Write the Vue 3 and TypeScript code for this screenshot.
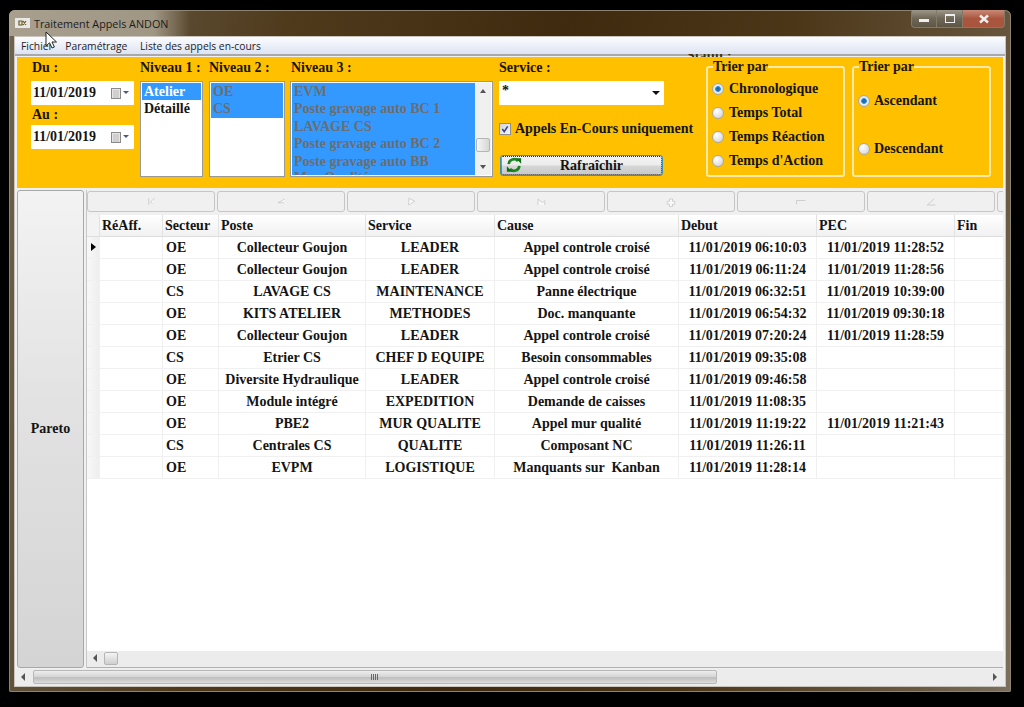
<script setup lang="ts">
const niveau1 = [
  { t: 'Atelier', on: true },
  { t: 'Détaillé', on: false },
]
const niveau3 = ['EVM', 'Poste gravage auto BC 1', 'LAVAGE CS', 'Poste gravage auto BC 2', 'Poste gravage auto BB', 'Mur Qualité']
const sortA = [
  { t: 'Chronologique', on: true },
  { t: 'Temps Total', on: false },
  { t: 'Temps Réaction', on: false },
  { t: "Temps d'Action", on: false },
]
const sortB = [
  { t: 'Ascendant', on: true },
  { t: 'Descendant', on: false },
]
const navIcons = [
  'M5 3v9M13 3 7 8l3 2',
  'M13 4 4 9h8',
  'M5 3v9l8-5z',
  'M4 12V4l6 5 3-3v6',
  'M6 4h4v3h3v4h-3v3H6v-3H3V7h3z',
  'M2 6h12M2 6v5',
  'M3 12 12 4M3 12h11',
  'M4 4h8',
]
const headers = ['', 'RéAff.', 'Secteur', 'Poste', 'Service', 'Cause', 'Debut', 'PEC', 'Fin']
const rows = [
  ['OE', 'Collecteur Goujon', 'LEADER', 'Appel controle croisé', '11/01/2019 06:10:03', '11/01/2019 11:28:52'],
  ['OE', 'Collecteur Goujon', 'LEADER', 'Appel controle croisé', '11/01/2019 06:11:24', '11/01/2019 11:28:56'],
  ['CS', 'LAVAGE CS', 'MAINTENANCE', 'Panne électrique', '11/01/2019 06:32:51', '11/01/2019 10:39:00'],
  ['OE', 'KITS ATELIER', 'METHODES', 'Doc. manquante', '11/01/2019 06:54:32', '11/01/2019 09:30:18'],
  ['OE', 'Collecteur Goujon', 'LEADER', 'Appel controle croisé', '11/01/2019 07:20:24', '11/01/2019 11:28:59'],
  ['CS', 'Etrier CS', 'CHEF D EQUIPE', 'Besoin consommables', '11/01/2019 09:35:08', ''],
  ['OE', 'Diversite Hydraulique', 'LEADER', 'Appel controle croisé', '11/01/2019 09:46:58', ''],
  ['OE', 'Module intégré', 'EXPEDITION', 'Demande de caisses', '11/01/2019 11:08:35', ''],
  ['OE', 'PBE2', 'MUR QUALITE', 'Appel mur qualité', '11/01/2019 11:19:22', '11/01/2019 11:21:43'],
  ['CS', 'Centrales CS', 'QUALITE', 'Composant NC', '11/01/2019 11:26:11', ''],
  ['OE', 'EVPM', 'LOGISTIQUE', 'Manquants sur  Kanban', '11/01/2019 11:28:14', ''],
]
</script>

<template>
  <div class="window">
    <header class="titlebar">
      <div class="app-title">
        <svg class="app-icon" width="15" height="10" viewBox="0 0 15 10">
          <rect width="15" height="10" fill="#e8e8e8" />
          <path d="M4 3h3v4H4zM8 3l3 4M11 3 8 7" fill="none" stroke="#6b5a1c" stroke-width="1.2" />
        </svg>
        <span class="title-text">Traitement Appels ANDON</span>
      </div>
      <div class="controls">
        <button class="ctl"><span class="min-mark"></span></button>
        <button class="ctl"><span class="max-mark"></span></button>
        <button class="ctl close">
          <svg width="12" height="10" viewBox="0 0 12 10"><path d="M2 1.5 10 8.5M10 1.5 2 8.5" stroke="#eeeeee" stroke-width="2.4" /></svg>
        </button>
      </div>
    </header>

    <div class="client">
      <nav class="menu">
        <span>Fichier</span>
        <span>Paramétrage</span>
        <span>Liste des appels en-cours</span>
      </nav>
      <span class="hidden-label">Statut :</span>

      <section class="panel">
        <div class="dates">
          <label class="lbl">Du :</label>
          <div class="date">
            <span>11/01/2019</span>
            <svg width="20" height="13" viewBox="0 0 20 13">
              <rect x="1.5" y="1.5" width="9" height="10" fill="#e6e6e6" stroke="#8a8a8a" />
              <path d="M3 4h6M3 6h6M3 8h6M3 10h6" stroke="#b9b9b9" />
              <path d="M13 4h6l-3 3z" fill="#4e5a7a" />
            </svg>
          </div>
          <label class="lbl au">Au :</label>
          <div class="date">
            <span>11/01/2019</span>
            <svg width="20" height="13" viewBox="0 0 20 13">
              <rect x="1.5" y="1.5" width="9" height="10" fill="#e6e6e6" stroke="#8a8a8a" />
              <path d="M3 4h6M3 6h6M3 8h6M3 10h6" stroke="#b9b9b9" />
              <path d="M13 4h6l-3 3z" fill="#4e5a7a" />
            </svg>
          </div>
        </div>

        <div class="col n1">
          <label class="lbl">Niveau 1 :</label>
          <ul class="list">
            <li v-for="i in niveau1" :key="i.t" :class="{ active: i.on }">{{ i.t }}</li>
          </ul>
        </div>

        <div class="col n2">
          <label class="lbl">Niveau 2 :</label>
          <ul class="list">
            <li class="sel">OE</li>
            <li class="sel">CS</li>
          </ul>
        </div>

        <div class="col n3">
          <label class="lbl">Niveau 3 :</label>
          <div class="list list3">
            <ul>
              <li v-for="i in niveau3" :key="i" class="sel">{{ i }}</li>
            </ul>
            <div class="vscroll">
              <span class="tri up"></span>
              <span class="vthumb"></span>
              <span class="tri down"></span>
            </div>
          </div>
        </div>

        <div class="col service">
          <label class="lbl">Service :</label>
          <div class="combo"><span class="star">*</span><i class="tri down dark"></i></div>
          <div class="check">
            <span class="box">
              <svg width="10" height="10" viewBox="0 0 13 13"><path d="M3 6.5 5.5 10 10 3" fill="none" stroke="#34418c" stroke-width="2" /></svg>
            </span>
            <span>Appels En-Cours uniquement</span>
          </div>
          <button class="refresh">
            <svg width="16" height="16" viewBox="0 0 18 17">
              <path d="M3 7.5A6 6 0 0 1 13.5 4" fill="none" stroke="#16861f" stroke-width="3" />
              <path d="M11 1h6v6z" fill="#0f6d18" />
              <path d="M15 9.5A6 6 0 0 1 4.5 13" fill="none" stroke="#16861f" stroke-width="3" />
              <path d="M7 16H1v-6z" fill="#0f6d18" />
            </svg>
            <span>Rafraîchir</span>
          </button>
        </div>

        <fieldset class="group g1">
          <legend>Trier par</legend>
          <div v-for="o in sortA" :key="o.t" class="radio">
            <span class="dot" :class="{ on: o.on }"></span>{{ o.t }}
          </div>
        </fieldset>
        <fieldset class="group g2">
          <legend>Trier par</legend>
          <div v-for="o in sortB" :key="o.t" class="radio">
            <span class="dot" :class="{ on: o.on }"></span>{{ o.t }}
          </div>
        </fieldset>
      </section>

      <div class="work">
        <button class="pareto">Pareto</button>
        <div class="main">
          <div class="navbar">
            <button v-for="(d, n) in navIcons" :key="n" class="nav">
              <svg width="12" height="12" viewBox="0 0 16 16"><path :d="d" fill="#f9f9f9" stroke="#c4c4c4" /></svg>
            </button>
          </div>
          <div class="grid">
            <div class="row head">
              <div v-for="(h, n) in headers" :key="n" class="cell">{{ h }}</div>
            </div>
            <div v-for="(r, n) in rows" :key="n" class="row">
              <div class="cell rh"><span v-if="n === 0" class="pointer"></span></div>
              <div class="cell"></div>
              <div class="cell left">{{ r[0] }}</div>
              <div class="cell">{{ r[1] }}</div>
              <div class="cell">{{ r[2] }}</div>
              <div class="cell">{{ r[3] }}</div>
              <div class="cell">{{ r[4] }}</div>
              <div class="cell">{{ r[5] }}</div>
              <div class="cell"></div>
            </div>
            <div class="grid-fill"></div>
            <div class="hscroll inner">
              <span class="tri lefty"></span>
              <span class="small-thumb"></span>
            </div>
          </div>
        </div>
      </div>

      <div class="hscroll outer">
        <span class="tri lefty"></span>
        <span class="big-thumb"><i></i></span>
        <span class="tri righty"></span>
      </div>
    </div>

    <svg class="cursor" width="12" height="19" viewBox="0 0 12 19">
      <path d="M1 1v14l3.5-3.2L7 17l2.4-1-2.4-5h4.5z" fill="#fff" stroke="#222" stroke-width="1" />
    </svg>
  </div>
</template>

<style scoped>
.window {
  position: relative;
  box-sizing: border-box;
  width: 1002px;
  height: 682px;
  margin: 10px 0 0 9px;
  padding: 0 6px 6px;
  display: flex;
  flex-direction: column;
  border-radius: 6px 6px 2px 2px;
  background: linear-gradient(100deg, #6e6350 0, #4f3a1c 25%, #3f2a0f 50%, #4c3618 70%, #6a5a42 92%, #7b705e 100%);
  box-shadow: inset 0 0 0 1px #8d8371;
  font-family: "Liberation Serif", serif;
  font-weight: 700;
  font-size: 14px;
  color: #141414;
}
.titlebar {
  height: 27px;
  flex: none;
  display: flex;
  justify-content: space-between;
  align-items: flex-start;
}
.app-title {
  display: flex;
  align-items: center;
  gap: 4px;
  height: 26px;
  margin-left: -6px;
  padding: 0 22px 0 6px;
  border-top-left-radius: 6px;
  background: linear-gradient(90deg, #a89f8e 0, #a09684 80%, rgba(120, 106, 84, 0) 100%);
}
.app-icon { flex: none; margin-top: -1px; }
.title-text {
  font: 400 10.8px "Open Sans", "Noto Sans", sans-serif;
  color: #1c1c1c;
}
.controls { display: flex; height: 18px; margin-right: 0; }
.ctl {
  width: 26px;
  height: 18px;
  padding: 0;
  border: 1px solid #847a6a;
  border-top: none;
  border-left-width: 0;
  background: linear-gradient(#9e9688, #6e6656 50%, #5e5645);
  display: flex;
  align-items: center;
  justify-content: center;
}
.ctl:first-child { border-left-width: 1px; border-radius: 0 0 0 4px; }
.close {
  width: 42px;
  border-radius: 0 0 4px 0;
  background: linear-gradient(#c98a76, #a9563f 50%, #a9553d);
}
.min-mark { display: block; width: 10px; height: 3px; background: #eee; margin-top: 4px; }
.max-mark { display: block; width: 8px; height: 6px; border: 1.5px solid #eee; border-top-width: 2.5px; }

.client {
  position: relative;
  flex: 1;
  min-height: 0;
  display: flex;
  flex-direction: column;
  background: #f0f0f0;
  box-shadow: 0 0 0 1px #c8c4bb;
  overflow: hidden;
}
.menu {
  height: 17px;
  flex: none;
  display: flex;
  align-items: center;
  gap: 12.5px;
  padding-left: 6px;
  background: linear-gradient(#fbfcfe, #dde3f3);
  border-bottom: 2px solid #a9a9a9;
  font: 400 10.3px "Open Sans", "Noto Sans", sans-serif;
  color: #20232b;
}
.panel {
  box-sizing: border-box;
  flex: none;
  height: 131px;
  margin: 1px 2px 0 2px;
  padding: 3px 0 0 14px;
  display: flex;
  background: #ffc000;
  overflow: hidden;
}
.hidden-label {
  position: absolute;
  left: 672px;
  top: 17px;
  height: 3px;
  line-height: 3px;
  overflow: hidden;
  color: #3b3210;
}
.lbl { display: block; height: 16px; line-height: 16px; margin-bottom: 5px; color: #1b1500; }
.dates { width: 103px; margin-right: 6px; flex: none; }
.dates .lbl { padding-left: 1px; }
.dates .au { height: 20px; line-height: 20px; margin: 0; }
.date {
  height: 24px;
  box-sizing: border-box;
  display: flex;
  align-items: center;
  justify-content: space-between;
  padding: 0 4px 0 2px;
  background: #fff;
  border-radius: 1px;
}
.col { flex: none; }
.n1 { width: 63px; margin-right: 6px; }
.n2 { width: 76px; margin-right: 5px; }
.n3 { width: 203px; margin-right: 6px; }
.n3 .lbl { padding-left: 1px; }
.service { width: 165px; }
.list {
  box-sizing: border-box;
  height: 96px;
  margin: 0;
  padding: 1px;
  list-style: none;
  background: #fff;
  border: 1px solid #9a9a92;
  overflow: hidden;
}
.list li { height: 17.4px; line-height: 17.4px; padding-left: 2px; }
.list .active { background: #3399ff; color: #fff; }
.list .sel { background: #3399ff; color: #6d6d6d; }
.list3 { display: flex; padding: 1px; }
.list3 ul { flex: 1; margin: 0; padding: 0; list-style: none; background: #3399ff; overflow: hidden; }
.list3 li:last-child { margin-top: -1px; }
.vscroll {
  width: 16px;
  flex: none;
  display: flex;
  flex-direction: column;
  align-items: center;
  justify-content: space-between;
  padding: 6px 0;
  box-sizing: border-box;
  background: #f0f0f0;
}
.vthumb {
  width: 14px;
  height: 14px;
  margin-top: 31px;
  box-sizing: border-box;
  border: 1px solid #b5b5b5;
  border-radius: 2px;
  background: linear-gradient(90deg, #f6f6f6, #d6d6d6);
}
.tri { display: block; width: 0; height: 0; border-style: solid; border-color: transparent; }
.tri.up { border-width: 0 3.5px 4px; border-bottom-color: #555; }
.tri.down { border-width: 4px 3.5px 0; border-top-color: #555; }
.tri.dark { border-width: 4px 4px 0; border-top-color: #111; }
.tri.lefty { border-width: 4px 4px 4px 0; border-right-color: #555; }
.tri.righty { border-width: 4px 0 4px 4px; border-left-color: #555; }
.combo {
  height: 24px;
  box-sizing: border-box;
  display: flex;
  align-items: center;
  justify-content: space-between;
  padding: 0 4px 0 3px;
  background: #fff;
  border-radius: 1px;
}
.star { margin-top: -4px; }
.check {
  display: flex;
  align-items: center;
  gap: 4px;
  margin-top: 16px;
  white-space: nowrap;
  height: 16px;
}
.box {
  width: 12px;
  height: 12px;
  box-sizing: border-box;
  border: 1px solid #8e8f8f;
  background: linear-gradient(135deg, #cfd3dc, #f6f6f6);
  display: flex;
  align-items: center;
  justify-content: center;
  flex: none;
}
.box svg { flex: none; }
.refresh {
  display: block;
  position: relative;
  box-sizing: border-box;
  width: 163px;
  height: 21px;
  margin: 18px 0 0 1px;
  padding: 0 0 0 20px;
  border: 1px solid #3c8fb5;
  border-radius: 3px;
  outline: 1px dotted #333;
  outline-offset: -2px;
  background: linear-gradient(#f4f4f4, #ececec 48%, #d6d6d6 52%, #c8c8c8);
  font: inherit;
  color: #141414;
  text-align: center;
}
.refresh svg { position: absolute; left: 5px; top: 1px; }
.group {
  box-sizing: border-box;
  flex: none;
  width: 139px;
  height: 117px;
  margin: 0 0 0 42px;
  padding: 3px 0 0 4px;
  border: 2px solid #ffe9a8;
  border-radius: 3px;
}
.g2 { margin-left: 7px; padding-top: 15px; }
.group legend { padding: 0; margin-left: 1px; line-height: 14px; color: #1b1500; }
.radio { display: flex; align-items: center; gap: 5px; height: 23.9px; white-space: nowrap; }
.g2 .radio { gap: 4px; height: 24px; margin-bottom: 24px; }
.dot {
  width: 10px;
  height: 10px;
  flex: none;
  border-radius: 50%;
  border: 1px solid #a8a8a8;
  background: radial-gradient(circle at 35% 30%, #fff, #cfcfcf);
}
.dot.on { background: radial-gradient(circle, #0a5fa8 0, #2f86c8 35%, #e8eef4 45%, #cfd5da 100%); }

.work { flex: 1; min-height: 0; display: flex; gap: 2px; margin: 2px 2px 0 2px; }
.pareto {
  box-sizing: border-box;
  width: 67px;
  flex: none;
  padding: 0;
  border: 1px solid #a8a8a8;
  border-radius: 3px;
  background: linear-gradient(#f3f3f3, #e2e2e2 45%, #d4d4d4);
  font: inherit;
  color: #141414;
}
.main { flex: 1; min-width: 0; display: flex; flex-direction: column; border-left: 1px solid #c8c8c8; }
.navbar { height: 25px; flex: none; display: flex; gap: 2px; padding-top: 1px; box-sizing: border-box; overflow: hidden; }
.nav {
  box-sizing: border-box;
  width: 128px;
  height: 21px;
  flex: none;
  padding: 0;
  border: 1px solid #c6c6c6;
  border-radius: 3px;
  background: #f0f0f0;
  display: flex;
  align-items: center;
  justify-content: center;
}
.grid {
  flex: 1;
  min-height: 0;
  display: flex;
  flex-direction: column;
  background: #fff;
  overflow: hidden;
}
.row {
  height: 22px;
  flex: none;
  display: grid;
  grid-template-columns: 13px 63px 56px 147px 129px 184px 138px 138px 60px;
}
.cell {
  box-sizing: border-box;
  line-height: 21px;
  text-align: center;
  white-space: pre;
  overflow: hidden;
  border-right: 1px solid #f0f0f0;
  border-bottom: 1px solid #f0f0f0;
}
.cell.left { text-align: left; padding-left: 3px; }
.head .cell {
  text-align: left;
  padding-left: 2px;
  background: linear-gradient(#fff, #f1f1f1);
  border-right-color: #e2e2e2;
  border-bottom-color: #dedede;
}
.rh { background: linear-gradient(90deg, #f8f8f8, #eeeeee); position: relative; }
.head .cell:first-child { background: #f3f3f3; }
.pointer {
  position: absolute;
  left: 4px;
  top: 6px;
  width: 0;
  height: 0;
  border-style: solid;
  border-width: 4.5px 0 4.5px 5px;
  border-color: transparent transparent transparent #000;
}
.grid-fill { flex: 1; }
.hscroll {
  flex: none;
  display: flex;
  align-items: center;
  background: #ececec;
}
.hscroll.inner {
  box-sizing: border-box;
  height: 17px;
  padding: 0 0 2px 6px;
  border-bottom: 1px solid #b0b0b0;
}
.small-thumb {
  width: 14px;
  height: 13px;
  box-sizing: border-box;
  margin-left: 7px;
  border: 1px solid #b5b5b5;
  border-radius: 2px;
  background: linear-gradient(#f4f4f4, #cfcfcf);
}
.hscroll.outer {
  height: 17px;
  margin-top: 1px;
  padding: 0 8px 2px 6px;
  box-sizing: border-box;
}
.big-thumb {
  width: 684px;
  height: 14px;
  box-sizing: border-box;
  margin-left: 8px;
  border: 1px solid #b8b8b8;
  border-radius: 2px;
  background: linear-gradient(#ededed, #d4d4d4 50%, #bdbdbd 55%, #dcdcdc);
  display: flex;
  align-items: center;
  justify-content: center;
}
.big-thumb i {
  width: 8px;
  height: 6px;
  background: repeating-linear-gradient(90deg, #666 0 1px, transparent 1px 2px);
}
.hscroll.outer .righty { margin-left: auto; }
.cursor { position: absolute; left: 36px; top: 21px; }
</style>

<style>
html, body { background: #000; }
body { margin: 0; overflow: hidden; }
</style>
